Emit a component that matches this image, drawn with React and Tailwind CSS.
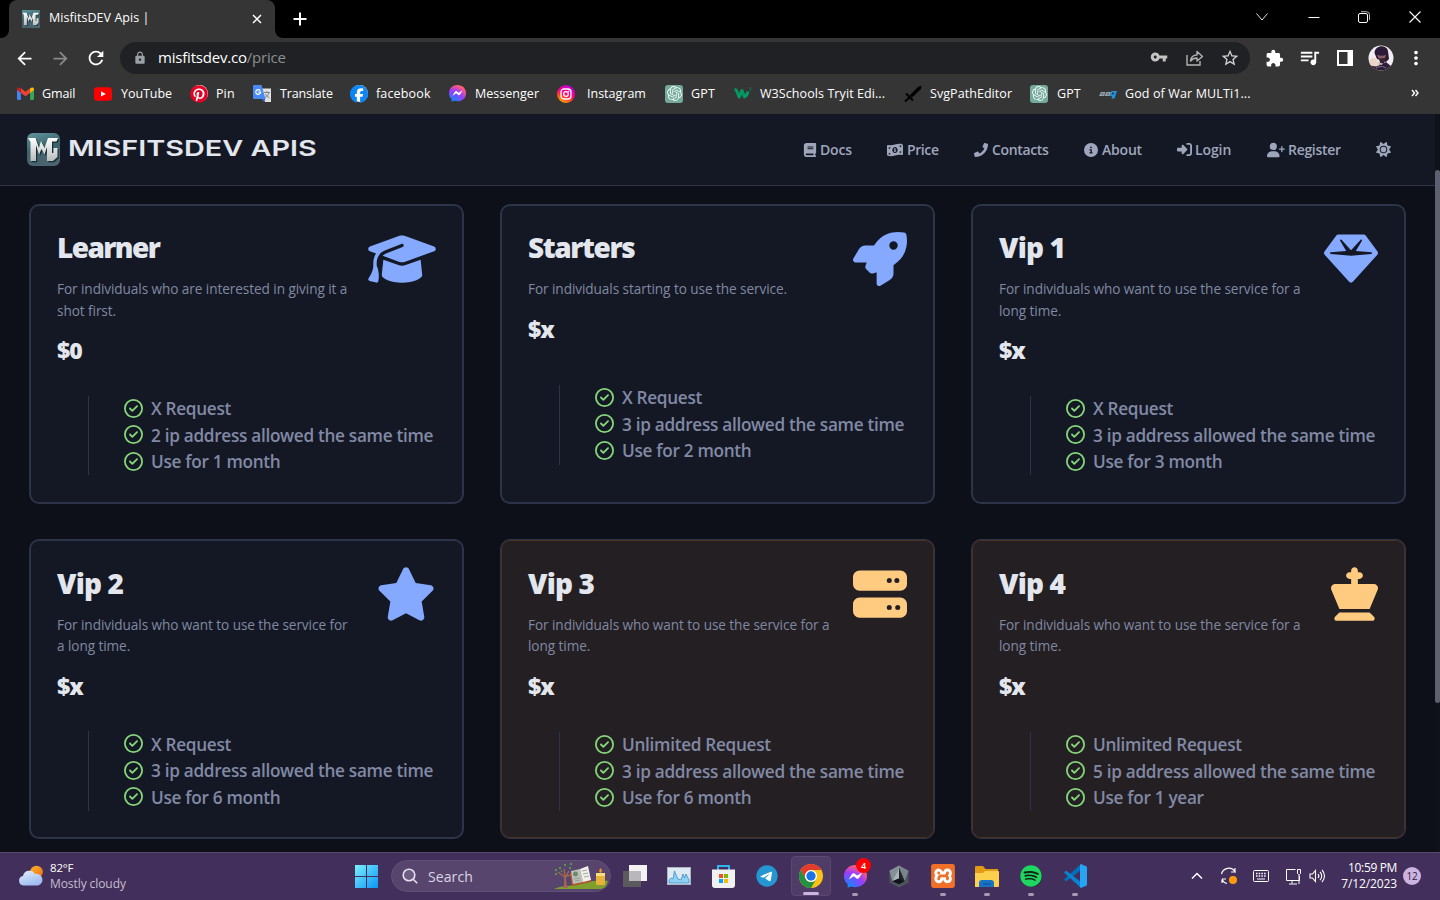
import React from "react";
import {
  FaBook, FaMoneyBill1Wave, FaCircleInfo, FaRightToBracket, FaUserPlus, FaSun,
  FaGraduationCap, FaRocket, FaGem, FaStar, FaServer, FaChessKing, FaRegCircleCheck,
  FaPinterest, FaFacebook, FaSpotify, FaTelegram,
} from "react-icons/fa6";
import { FaPhone } from "react-icons/fa";
import { SiOpenai, SiXampp } from "react-icons/si";
import { MdLock, MdVpnKey, MdStarBorder, MdExtension, MdQueueMusic, MdMoreVert, MdRefresh, MdArrowBack, MdArrowForward } from "react-icons/md";

function Logo({ className, rounded = 6 }) {
  return (
    <svg viewBox="0 0 33 33" className={className}>
      <defs>
        <linearGradient id="lgBg" x1="0" y1="0" x2="0.3" y2="1">
          <stop offset="0" stopColor="#5f959d" />
          <stop offset="0.55" stopColor="#3c626b" />
          <stop offset="1" stopColor="#4a6470" />
        </linearGradient>
        <linearGradient id="lgFg" x1="0" y1="0" x2="0" y2="1">
          <stop offset="0" stopColor="#ffffff" />
          <stop offset="1" stopColor="#b9bcbc" />
        </linearGradient>
      </defs>
      <rect width="33" height="33" rx={rounded} fill="url(#lgBg)" />
      <g transform="translate(1.2 1.2)" fill="#10242a" opacity="0.85">
        <path d="M1 5h7.500L12 15l2-7 3.500 7L21 5h10l-1.500 3.500H25V20h1.500v-5h4v9L26 28h-6V14l-2.500 7.500L14.500 16 12 21.500 9 12v16H3.500V9z" />
      </g>
      <path fill="url(#lgFg)" d="M1 5h7.500L12 15l2-7 3.500 7L21 5h10l-1.500 3.500H25V20h1.500v-5h4v9L26 28h-6V14l-2.500 7.500L14.500 16 12 21.500 9 12v16H3.500V9z" />
    </svg>
  );
}

function Messenger({ className }) {
  return (
    <svg viewBox="0 0 24 24" className={className}>
      <defs>
        <radialGradient id="msg" cx="0.2" cy="1" r="1.1">
          <stop offset="0" stopColor="#0090ff" />
          <stop offset="0.6" stopColor="#9a3cff" />
          <stop offset="0.9" stopColor="#ff5a7c" />
          <stop offset="1" stopColor="#ff6968" />
        </radialGradient>
      </defs>
      <path fill="url(#msg)" d="M12 0C5.3 0 0 4.9 0 11.6c0 3.500 1.400 6.500 3.800 8.600v3.500l3.500-1.300c1.500.4 3 .7 4.700.7 6.700 0 12-4.900 12-11.500S18.700 0 12 0z" />
      <path fill="#fff" d="M4.800 15 8.300 9.400c.6-.9 1.800-1.100 2.600-.5l2.800 2.100 5.500-3.200-3.500 5.700c-.6.900-1.800 1.100-2.600.5l-2.800-2.200z" />
    </svg>
  );
}

const Gmail = () => (
  <svg viewBox="0 0 24 18" className="h-[13px] w-[17px]">
    <path fill="#4285f4" d="M0 3v13.500A1.500 1.500 0 0 0 1.500 18H5.500V8z" />
    <path fill="#34a853" d="M18.500 18h4a1.500 1.500 0 0 0 1.500-1.500V3l-5.500 5z" />
    <path fill="#ea4335" d="M5.500 1.600 12 6.500l6.500-4.900v6.600L12 13 5.500 8.200z" />
    <path fill="#c5221f" d="M0 3C0 .2 3-.5 5.500 1.600v6.600L0 4z" />
    <path fill="#fbbc04" d="M24 3c0-2.800-3-3.500-5.500-1.400v6.600L24 4z" />
  </svg>
);

const YouTube = () => (
  <svg viewBox="0 0 18 14" className="h-[14px] w-[18px]">
    <rect width="18" height="13.500" y="0.200" rx="3" fill="#f00" />
    <path d="m7 4.200 4.800 2.700L7 9.600z" fill="#fff" />
  </svg>
);

const Round = ({ children }) => (
  <span className="flex size-[17px] items-center justify-center rounded-full bg-white">{children}</span>
);

const Translate = () => (
  <svg viewBox="0 0 18 17" className="h-[17px] w-[18px]">
    <path fill="#e0e0e0" d="M7 3.500h11V17H12z" />
    <path fill="#4a8af4" d="M1 0h7.500l4 14H1a1 1 0 0 1-1-1V1a1 1 0 0 1 1-1z" />
    <path fill="#2a62c9" d="M9 14h3.500L10 17z" />
    <path fill="none" stroke="#fff" strokeWidth="1.200" d="M7.200 5.600A2.400 2.400 0 1 0 7.600 7.200H5.300" />
    <path fill="none" stroke="#7d8288" strokeWidth="1" d="M11 7.500h6M14 6v1.500M16 7.500c-.5 2.500-2 4-4 5M12.500 9c.7 1.500 2 3 4 4" />
  </svg>
);

const Instagram = () => (
  <svg viewBox="0 0 18 18" className="size-[18px]">
    <defs>
      <linearGradient id="ig" x1="0.200" y1="1" x2="0.700" y2="0">
        <stop offset="0" stopColor="#ffc400" />
        <stop offset="0.300" stopColor="#ff4a20" />
        <stop offset="0.550" stopColor="#ff0080" />
        <stop offset="1" stopColor="#b800e0" />
      </linearGradient>
    </defs>
    <circle cx="9" cy="9" r="9" fill="url(#ig)" />
    <rect x="4" y="4" width="10" height="10" rx="3" fill="none" stroke="#fff" strokeWidth="1.300" />
    <circle cx="9" cy="9" r="2.300" fill="none" stroke="#fff" strokeWidth="1.300" />
    <circle cx="11.800" cy="6.200" r="0.700" fill="#fff" />
  </svg>
);

const Gpt = () => (
  <span className="flex size-[18px] items-center justify-center rounded-[3px] bg-[#74aa9c]">
    <SiOpenai className="size-[15px] text-[#eef6f4]" />
  </span>
);

const W3 = () => (
  <svg viewBox="0 0 18 14" className="h-[14px] w-[18px]">
    <path d="M.5 2.500c1.500 0 2 .5 2.500 2L5 10l3-6.500 2.500 6.500c2-1 3-3 3.300-5.500" fill="none" stroke="#059862" strokeWidth="3" strokeLinejoin="round" />
    <path d="M15 1h2l-1 1.500 1 1-1.500 1" fill="none" stroke="#0a7a52" strokeWidth="0.900" />
  </svg>
);

const Sword = () => (
  <svg viewBox="0 0 18 18" className="size-[18px]">
    <path d="M17.500.5 17 4 8 12.500 5.500 10.500 14 2z" fill="#000" />
    <path d="m2 8.500 7 7M1 16.500l5-4.500" stroke="#000" strokeWidth="2" />
  </svg>
);

const Dodi = () => (
  <svg viewBox="0 0 18 10" className="h-[10px] w-[18px]">
    <path d="M0 7 2 3h4.500L5 7zM5.500 7l2-4H12l-1.500 4z" fill="#93a0a8" />
    <path d="M2.500 5.500 3 4.500h1.500l-.5 1zM8 5.500l.5-1H10l-.5 1z" fill="#353535" />
    <path d="m10.500 7 2-5h5.500l-2.500 7.500h-3l.5-2.500zM13.500 3.500l-1 2h2l.7-2z" fill="#1f95dd" fillRule="evenodd" />
  </svg>
);

const bookmarks = [
  { label: "Gmail", w: "w-[78px]", pad: "pl-[8px]", t: "tracking-[-0.1px]", icon: <Gmail /> },
  { label: "YouTube", w: "w-[96px]", pad: "pl-[9px]", t: "tracking-[-0.05px]", icon: <YouTube /> },
  { label: "Pin", w: "w-[63px]", pad: "pl-[8px]", t: "tracking-[0.1px]", icon: <Round><FaPinterest className="size-[18px] shrink-0 text-[#e60023]" /></Round> },
  { label: "Translate", w: "w-[97px]", pad: "pl-[9px]", t: "tracking-[-0.15px]", icon: <Translate /> },
  { label: "facebook", w: "w-[98px]", pad: "pl-[8px]", t: "tracking-[0.15px]", icon: <Round><FaFacebook className="size-[18px] shrink-0 text-[#0d86f5]" /></Round> },
  { label: "Messenger", w: "w-[109px]", pad: "pl-[9px]", t: "tracking-[0.03px]", icon: <Messenger className="size-[17px]" /> },
  { label: "Instagram", w: "w-[108px]", pad: "pl-[12px]", t: "tracking-[0px]", icon: <Instagram /> },
  { label: "GPT", w: "w-[69px]", pad: "pl-[8px]", t: "tracking-[0.2px]", icon: <Gpt /> },
  { label: "W3Schools Tryit Edi...", w: "w-[170px]", pad: "pl-[8px]", t: "tracking-[0.08px]", icon: <W3 /> },
  { label: "SvgPathEditor", w: "w-[126px]", pad: "pl-[8px]", t: "tracking-[0.06px]", icon: <Sword /> },
  { label: "GPT", w: "w-[69px]", pad: "pl-[9px]", t: "tracking-[0.1px]", icon: <Gpt /> },
  { label: "God of War MULTi1...", w: "w-[160px]", pad: "pl-[8px]", t: "tracking-[0.12px]", icon: <Dodi /> },
];

function TabStrip() {
  return (
    <div className="flex h-[38px] items-end bg-black">
      <div className="relative ml-[9px] flex h-[38px] w-[266px] items-center rounded-t-[8px] bg-[#353535] pb-px text-white">
        <Logo className="ml-[13px] size-[18px]" rounded={0} />
        <span className="ml-[9px] whitespace-nowrap text-[12.500px] tracking-[0.05px]">MisfitsDEV Apis |</span>
        <svg viewBox="0 0 10 10" className="ml-auto mr-[13px] size-[10px]"><path d="m1 1 8 8M9 1 1 9" stroke="#fff" strokeWidth="1.500" /></svg>
        <svg viewBox="0 0 8 8" className="absolute bottom-0 -left-2 size-2"><path d="M8 0v8H0a8 8 0 0 0 8-8z" fill="#353535" /></svg>
        <svg viewBox="0 0 8 8" className="absolute -right-2 bottom-0 size-2"><path d="M0 0v8h8a8 8 0 0 1-8-8z" fill="#353535" /></svg>
      </div>
      <svg viewBox="0 0 14 14" className="mb-[12px] ml-[18px] size-[14px]"><path d="M7 .5v13M.5 7h13" stroke="#fff" strokeWidth="2" /></svg>
      <div className="ml-auto flex h-[33px] items-center self-start text-white">
        <svg viewBox="0 0 12 8" className="mr-[40px] h-[8px] w-[12px]"><path d="m.5.5 5.500 6.500L11.500.5" fill="none" stroke="#e0e0e0" /></svg>
        <svg viewBox="0 0 12 12" className="mr-[38px] size-[12px]"><path d="M.5 6.500h11" stroke="#fff" /></svg>
        <svg viewBox="0 0 12 12" className="mr-[39px] size-[12px]">
          <rect x="0.500" y="2.500" width="9" height="9" rx="1.500" fill="none" stroke="#fff" />
          <path d="M3 .7h5.500a3 3 0 0 1 3 3V9" fill="none" stroke="#bbb" />
        </svg>
        <svg viewBox="0 0 12 12" className="mr-[19px] size-[12px]"><path d="m.5.5 11 11m0-11-11 11" stroke="#fff" strokeWidth="1.100" /></svg>
      </div>
    </div>
  );
}

function Toolbar() {
  return (
    <div className="flex h-[40px] items-center bg-[#353535] pl-[14px] text-white">
      <MdArrowBack className="size-[21px]" />
      <MdArrowForward className="ml-[15px] size-[21px] text-[#8a8a8a]" />
      <MdRefresh className="ml-[14px] size-[22px]" />
      <div className="ml-[13px] flex h-[32px] w-[1130px] items-center rounded-full bg-[#202124] pl-[13px]">
        <MdLock className="size-[14px] text-[#9aa0a6]" />
        <span className="ml-[11px] whitespace-nowrap pb-[2px] text-[15px] tracking-[-0.2px]">
          misfitsdev.co<span className="text-[#8b8e92]">/price</span>
        </span>
        <MdVpnKey className="ml-auto mb-[2px] size-[18px] text-[#c4c4c4]" />
        <svg viewBox="0 0 18 16" className="ml-[18px] h-[16px] w-[18px]" fill="none" stroke="#b4b4b4" strokeWidth="1.400">
          <path d="M1 5v10h13v-4" /><path d="M4.500 11c.5-4 3-6 6.500-6V1.500L16.500 6.500 11 11V8c-3 0-5 1-6.500 3z" strokeLinejoin="round" />
        </svg>
        <MdStarBorder className="ml-[16px] mr-[10px] mb-px size-[20px] text-[#d0d0d0]" />
      </div>
      <MdExtension className="ml-[15px] size-[19px]" />
      <MdQueueMusic className="ml-[14px] mb-px size-[23px]" />
      <svg viewBox="0 0 16 16" className="ml-[16px] size-[16px]"><path fill="#fff" fillRule="evenodd" d="M0 0h16v16H0zM2 2v12h8.500V2z" /></svg>
      <svg viewBox="0 0 26 26" className="ml-[15px] size-[26px]">
        <clipPath id="av"><circle cx="13" cy="13" r="12.500" /></clipPath>
        <g clipPath="url(#av)">
          <rect width="26" height="26" fill="#f1edf2" />
          <path d="M6.500 8c0-8 12-9 13.500-2l1 8-3 3-9-3z" fill="#2b1a38" />
          <path d="M9 10c3 1 6 1 9 0l-1 3-6 1z" fill="#8d5d66" />
          <path d="M11 13.500h6.500L16 19l-4-1z" fill="#3b2231" />
          <path d="M3 17c4-3 8 1 10 3l5-3 6 5v5H3z" fill="#2e1f38" />
          <path d="M1.500 16c1-4 5-4 7.500-1l3 5-4 1.500-6-1z" fill="#ecd6c9" />
          <path d="M8 23c4-2 7-2 10 0" stroke="#84708f" fill="none" />
        </g>
      </svg>
      <MdMoreVert className="ml-[11px] size-[22px]" />
    </div>
  );
}

function Bookmarks() {
  return (
    <div className="flex h-[36px] items-center bg-[#353535] pb-[4px] pl-[16px] text-[12.500px] text-white">
      {bookmarks.map((b, i) => (
        <div key={i} className={"flex shrink-0 items-center whitespace-nowrap " + b.w}>
          <span className="flex w-[18px] justify-center pb-px">{b.icon}</span>
          <span className={b.pad + " " + b.t}>{b.label}</span>
        </div>
      ))}
      <svg viewBox="0 0 8 8" className="ml-auto mr-[21px] mb-[2px] size-[8px]"><path d="m1 1 2.500 3L1 7m3.500-6L7 4 4.500 7" fill="none" stroke="#fff" strokeWidth="1.400" /></svg>
    </div>
  );
}

const nav = [
  { label: "Docs", Icon: FaBook, w: "w-[83px]", i: "size-[14px] -ml-px mr-[3px]", t: "tracking-[-0.2px]" },
  { label: "Price", Icon: FaMoneyBill1Wave, w: "w-[87px]", i: "size-[16px] mr-[4px]", t: "tracking-[-0.4px]" },
  { label: "Contacts", Icon: FaPhone, w: "w-[110px]", i: "size-[14px] mr-[4px]", t: "tracking-[-0.35px]" },
  { label: "About", Icon: FaCircleInfo, w: "w-[93px]", i: "size-[14px] mr-[4px]", t: "tracking-[-0.2px]" },
  { label: "Login", Icon: FaRightToBracket, w: "w-[90px]", i: "size-[15px] mr-[3px]", t: "tracking-[-0.1px]" },
  { label: "Register", Icon: FaUserPlus, w: "w-[109px]", i: "size-[18px] mr-[3px]", t: "tracking-[-0.3px]" },
];

function Header() {
  return (
    <header className="flex h-[72px] shrink-0 items-center border-b border-[#2f3446] bg-[#141824] pl-[27px]">
      <Logo className="size-[33px]" />
      <span className="ml-[8px] w-[250px] origin-left scale-x-[1.310] whitespace-nowrap pb-[2px] font-[Inter,sans-serif] text-[22px] font-semibold text-[#e3e6ed]">
        MISFITSDEV APIS
      </span>
      <nav className="ml-auto flex items-center pr-[44px] text-[14px] font-semibold text-[#9fa6bc]">
        {nav.map(({ label, Icon, w, i, t }) => (
          <a key={label} className={"flex items-center whitespace-nowrap " + w + " " + t}>
            <Icon className={"shrink-0 " + i} />
            {label}
          </a>
        ))}
        <FaSun className="size-[15px]" />
      </nav>
    </header>
  );
}

const LONG = "For individuals who want to use the service for a long time.";
const plans = [
  { name: "Learner", t: "tracking-[-1.6px]", desc: "For individuals who are interested in giving it a shot first.", price: "$0", Icon: FaGraduationCap, icon: "h-[54px] w-[68px]", req: "X", ip: 2, time: "1 month" },
  { name: "Starters", t: "tracking-[-1.4px]", desc: "For individuals starting to use the service.", price: "$x", Icon: FaRocket, icon: "size-[54px]", req: "X", ip: 3, time: "2 month" },
  { name: "Vip 1", desc: LONG, price: "$x", Icon: FaGem, icon: "size-[54px]", req: "X", ip: 3, time: "3 month" },
  { name: "Vip 2", desc: LONG, price: "$x", Icon: FaStar, icon: "h-[54px] w-[60px]", req: "X", ip: 3, time: "6 month", narrow: true },
  { name: "Vip 3", desc: LONG, price: "$x", Icon: FaServer, icon: "size-[54px]", req: "Unlimited", ip: 3, time: "6 month", gold: true },
  { name: "Vip 4", desc: LONG, price: "$x", Icon: FaChessKing, icon: "h-[54px] w-[47px]", req: "Unlimited", ip: 5, time: "1 year", gold: true },
];

function Card({ plan }) {
  const { name, t = "tracking-[-0.8px]", desc, price, Icon, icon, req, ip, time, gold, narrow } = plan;
  const tone = gold
    ? "border border-[#303449] bg-[#241f23] shadow-[inset_0_0_0_1px_#48301f] px-[27px] pt-[25.300px]"
    : "border-2 border-[#2d3348] bg-[#141824] px-[26px] pt-[24.300px]";
  return (
    <article className={"flex h-[300px] flex-col rounded-[10px] " + tone}>
      <div className="flex items-start justify-between">
        <div className={narrow ? "w-[296px]" : "w-[306px]"}>
          <h2 className={"font-['Noto_Sans','Open_Sans',sans-serif] text-[28px] font-black leading-[34px] text-[#e3e6ed] " + t}>{name}</h2>
          <p className="mt-[14px] text-[13.600px] leading-[21.500px] tracking-[-0.070px] text-[#8088a2]">{desc}</p>
          <p className="mt-[14px] font-['Noto_Sans','Open_Sans',sans-serif] text-[23px] font-black leading-[30px] tracking-[-1px] text-[#e3e6ed]">{price}</p>
        </div>
        <Icon className={"mt-[1.400px] shrink-0 " + icon + (gold ? " text-[#ffcb80]" : " text-[#84a9ff]")} />
      </div>
      <div className="flex flex-1 flex-col justify-center pl-[31px] pt-[4px]">
        <ul className="border-l border-[#2d3348] pl-[35px] text-[17.200px] font-semibold text-[#8189a4]">
          {[`${req} Request`, `${ip} ip address allowed the same time`, `Use for ${time}`].map((s) => (
            <li key={s} className="flex h-[26.500px] items-center whitespace-nowrap tracking-[-0.3px]">
              <FaRegCircleCheck className="mb-[2px] mr-[8px] size-[19px] shrink-0 text-[#86d67a]" />
              {s}
            </li>
          ))}
        </ul>
      </div>
    </article>
  );
}

const TaskIcon = ({ children, dot, active, badge }) => (
  <div className="flex w-[44px] justify-center">
    <div className={"relative flex h-[40px] w-[40px] items-center justify-center rounded-[4px] " + (active ? "border border-[#5a4871] bg-[#4f3d68]" : "")}>
      {children}
      {dot && <span className={"absolute bottom-0 h-[3px] rounded-full " + (active ? "w-[16px] bg-[#cdb3e0]" : "w-[6px] bg-[#a89bb6]")} />}
      {badge && <span className="absolute right-[4px] top-[2px] flex size-[15px] items-center justify-center rounded-full bg-[#f00] text-[9px] font-semibold text-white">{badge}</span>}
    </div>
  </div>
);

function Chrome() {
  return (
    <svg viewBox="0 0 48 48" className="size-[24px]">
      <circle cx="24" cy="24" r="24" fill="#fbc116" />
      <path d="M3.200 12A24 24 0 0 1 44.800 12H24a12 12 0 0 0-10.400 18z" fill="#e33b2e" />
      <path d="M3.200 12 13.600 30A12 12 0 0 0 34.400 30L24 48A24 24 0 0 1 3.200 12z" fill="#229342" />
      <circle cx="24" cy="24" r="12" fill="#fff" />
      <circle cx="24" cy="24" r="9.300" fill="#1a73e8" />
    </svg>
  );
}

function Taskbar() {
  return (
    <footer className="flex h-[48px] shrink-0 items-center border-t border-[#594a6b] bg-[#422f5b] pb-px text-white">
      <div className="flex w-[355px] items-center pl-[18px]">
        <svg viewBox="0 0 26 22" className="h-[22px] w-[26px]">
          <defs>
            <linearGradient id="sunG" x1="0" y1="0" x2="1" y2="1"><stop offset="0" stopColor="#fbb72b" /><stop offset="1" stopColor="#ee6a12" /></linearGradient>
            <linearGradient id="cl" x1="0" y1="0" x2="0.500" y2="1"><stop offset="0" stopColor="#e4eefc" /><stop offset="1" stopColor="#9fbdf0" /></linearGradient>
          </defs>
          <circle cx="18.500" cy="7" r="6.300" fill="url(#sunG)" />
          <path d="M5.500 20.500a4.800 4.800 0 0 1-.5-9.500 6.500 6.500 0 0 1 12-2 5.900 5.900 0 0 1 3 11.500z" fill="url(#cl)" />
        </svg>
        <div className="ml-[6px] whitespace-nowrap text-[12px] leading-[16px]">
          <div className="text-[11.500px] tracking-[-0.2px]">82°F</div>
          <div className="tracking-[-0.08px] text-[#c7becf]">Mostly cloudy</div>
        </div>
      </div>
      <svg viewBox="0 0 23 23" className="size-[23px]">
        <defs><linearGradient id="win" x1="0" y1="0" x2="1" y2="1"><stop offset="0" stopColor="#7cf0ff" /><stop offset="1" stopColor="#0a94f5" /></linearGradient></defs>
        <path fill="url(#win)" d="M0 0h11v11H0zM12 0h11v11H12zM0 12h11v11H0zM12 12h11v11H12z" />
      </svg>
      <div className="ml-[13px] flex h-[32px] w-[220px] items-center rounded-full border border-[#5f4f75] bg-[#57456e] pl-[10px]">
        <svg viewBox="0 0 16 16" className="size-[16px]" fill="none" stroke="#e6e0ec" strokeWidth="1.600"><circle cx="7" cy="7" r="5.800" fill="#6d5d82" /><path d="m11.200 11.200 4 4" /></svg>
        <span className="ml-[10px] text-[14px] tracking-[0.1px] text-[#dcd5e2]">Search</span>
        <svg viewBox="0 0 56 28" className="ml-auto mr-[1px] h-[28px] w-[56px]">
          <path d="M1 27c8-4 22-3 30-6 9-3 20-3 24-2l-1 3c-1 3-4 5-8 5z" fill="#7fa02c" />
          <path d="M12 25V15L5 10m7 6 4-7M12 14l-1-7m1 8 8-3" fill="none" stroke="#a9694f" strokeWidth="1.300" />
          <path d="M10 26c2-3 1.500-8 1.500-11h1.500c0 4 0 8 2 11z" fill="#a9694f" />
          <path d="M2 8h2m0 4H2m4-6h2m3-3h2m3 3h2m-1-4h2M8 9h1m11 1h2" stroke="#4f9c3c" strokeWidth="1.800" />
          <path d="m17 11 2 13 19-4-3-14z" fill="#b4562b" />
          <path d="m18 9 9-2 3 13-10 2z" fill="#b9c0b8" /><path d="m27 7 8-3 3 14-8 2z" fill="#f0f0ec" />
          <circle cx="22.500" cy="12" r="2.500" fill="#6f8b6f" /><path d="m21 17 6-1m-5 3 5-1M29 9l5-1m-4 4 5-1m-4 4 5-1" stroke="#8d948d" strokeWidth="0.800" />
          <rect x="43" y="11" width="9" height="12" rx="1" fill="#e6b23c" /><rect x="43" y="11" width="9" height="3" fill="#f8de7c" />
          <path d="M47.500 11c-3-2 0-4 0-5 2 2 2 4 0 5z" fill="#f78b1e" />
        </svg>
      </div>
      <div className="ml-[2px] flex">
        <TaskIcon>
          <svg viewBox="0 0 24 22" className="h-[22px] w-[24px]"><rect x="6" width="18" height="16" fill="#f4f2f5" /><rect y="6" width="18" height="16" fill="#5b5b5d" /><rect x="6" y="6" width="12" height="10" fill="#b9b7bb" /></svg>
        </TaskIcon>
        <TaskIcon>
          <svg viewBox="0 0 24 18" className="h-[18px] w-[24px]"><rect x="0.500" y="0.500" width="23" height="17" fill="#dfe9f1" stroke="#a8b4bf" /><path d="M2 13l2-2 2 1 1.500-8L9 8l2 4 3 1 2-6 1.500 4L19 7l3 6v3H2z" fill="#8fd0f5" stroke="#3d8fc7" strokeWidth="0.800" /></svg>
        </TaskIcon>
        <TaskIcon>
          <svg viewBox="0 0 23 23" className="size-[23px]"><path d="M6 6V1h11v5" fill="none" stroke="#2ab4f0" strokeWidth="2" /><path d="M0 4.500h23V20a3 3 0 0 1-3 3H3a3 3 0 0 1-3-3z" fill="#f1f1f2" /><path d="M7 9h4v4H7z" fill="#f25022" /><path d="M12 9h4v4h-4z" fill="#7fba00" /><path d="M7 14h4v4H7z" fill="#00a4ef" /><path d="M12 14h4v4h-4z" fill="#ffb900" /></svg>
        </TaskIcon>
        <TaskIcon><span className="flex size-[20px] items-center justify-center rounded-full bg-white"><FaTelegram className="size-[22px] shrink-0 text-[#2497d3]" /></span></TaskIcon>
        <TaskIcon active dot><Chrome /></TaskIcon>
        <TaskIcon dot badge="4"><Messenger className="size-[23px]" /></TaskIcon>
        <TaskIcon>
          <svg viewBox="0 0 22 24" className="h-[23px] w-[22px]"><path d="M11 .5 21 6v12.500l-10 5-10-5V6z" fill="#4c555c" /><path d="M11 .5 21 6l-4 11-6-14z" fill="#7a848b" /><path d="M1 6 11 .5V3L4 17z" fill="#858f96" /><path d="M11 3 4 17l7-3z" fill="#aab3b9" /><path d="m11 3 6 14-6-3z" fill="#20252a" /><path d="m4 17 7-3 6 3-6 3z" fill="#101418" /></svg>
        </TaskIcon>
        <TaskIcon dot><span className="flex size-[22px] items-center justify-center bg-white"><SiXampp className="size-[24px] shrink-0 text-[#f0702a]" /></span></TaskIcon>
        <TaskIcon dot>
          <svg viewBox="0 0 24 22" className="h-[22px] w-[24px]"><path d="M0 2a1 1 0 0 1 1-1h7l2.500 3H23v5H0z" fill="#e29a14" /><path d="M0 8h8l2-2h13a1 1 0 0 1 1 1v14a1 1 0 0 1-1 1H0z" fill="#fdcf4f" /><path d="M4 22v-4a3 3 0 0 1 3-3h9a3 3 0 0 1 3 3v4z" fill="#1673c5" /><path d="M8 19h8" stroke="#0f4f91" /></svg>
        </TaskIcon>
        <TaskIcon dot><span className="flex size-[21px] items-center justify-center rounded-full bg-[#16251b]"><FaSpotify className="size-[22px] shrink-0 text-[#1ed760]" /></span></TaskIcon>
        <TaskIcon dot>
          <svg viewBox="0 0 24 24" className="size-[24px]"><path d="m1 15.500 2 2L18 6V0z" fill="#0072bd" /><path d="m1 8.500 2-2L18 18v6z" fill="#0a84d2" /><path d="m18 0 6 2.800v18.400L18 24l-1-1V1z" fill="#27a4f2" /></svg>
        </TaskIcon>
      </div>
      <div className="ml-auto flex items-center pr-[19px]">
        <svg viewBox="0 0 12 8" className="mr-[17px] h-[8px] w-[12px]"><path d="m1 6.500 5-5 5 5" fill="none" stroke="#fff" strokeWidth="1.500" /></svg>
        <svg viewBox="0 0 18 18" className="mr-[15px] size-[18px]" fill="none" stroke="#fff" strokeWidth="1.200"><path d="M1.500 7A7.500 7.500 0 0 1 15 4.500V1m0 4h-4M7 16.500A7.500 7.500 0 0 1 2 12.500V16m0-4h4" /><circle cx="13" cy="13" r="4" fill="#ff9a0d" stroke="none" /></svg>
        <svg viewBox="0 0 16 12" className="mr-[16px] h-[12px] w-[16px]" fill="none" stroke="#fff"><rect x="0.500" y="0.500" width="15" height="11" rx="1" /><path d="M3 3.500h10M3 6h10" strokeDasharray="1.500 1.200" strokeWidth="1.300" /><path d="M4 9h8" /></svg>
        <svg viewBox="0 0 17 17" className="mr-[7px] size-[17px]" fill="none" stroke="#fff"><path d="M10.500 1.500h-9v11h13V8M7 12.500v3m-3 .5h8M12.500 1.500h3v4l-1 1h-1l-1-1zM14 7v9" /></svg>
        <svg viewBox="0 0 17 14" className="mr-[14px] h-[14px] w-[17px]" fill="none" stroke="#fff" strokeWidth="1.100"><path d="M1 5h2.500l3-3.500v11L3.500 9H1zM9 5a3 3 0 0 1 0 4M11 3a5.500 5.500 0 0 1 0 8M13 1a8.500 8.500 0 0 1 0 12" /></svg>
        <div className="w-[57px] whitespace-nowrap text-right text-[12px] leading-[16px]">
          <div className="tracking-[-0.35px]">10:59 PM</div>
          <div className="tracking-[-0.12px]">7/12/2023</div>
        </div>
        <span className="ml-[6px] flex size-[18px] items-center justify-center rounded-full bg-[#cdb3e0] text-[10px] tracking-[-0.3px] text-[#2c1d3c]">12</span>
      </div>
    </footer>
  );
}

export default function App() {
  return (
    <div className="flex h-[900px] w-[1440px] flex-col overflow-hidden bg-[#0d1018] font-['Open_Sans','Noto_Sans',sans-serif]">
      <TabStrip />
      <Toolbar />
      <Bookmarks />
      <main className="flex min-h-0 flex-1">
        <div className="flex w-[1435px] flex-col overflow-hidden">
          <Header />
          <section className="grid grid-cols-3 gap-x-[36px] gap-y-[35.400px] px-[29px] pt-[18px]">
            {plans.map((p) => <Card key={p.name} plan={p} />)}
          </section>
        </div>
        <div className="w-[5px] bg-[#0f121a] pt-[56px]">
          <div className="h-[533px] rounded-[3px] bg-[#5d6070]" />
        </div>
      </main>
      <Taskbar />
    </div>
  );
}
